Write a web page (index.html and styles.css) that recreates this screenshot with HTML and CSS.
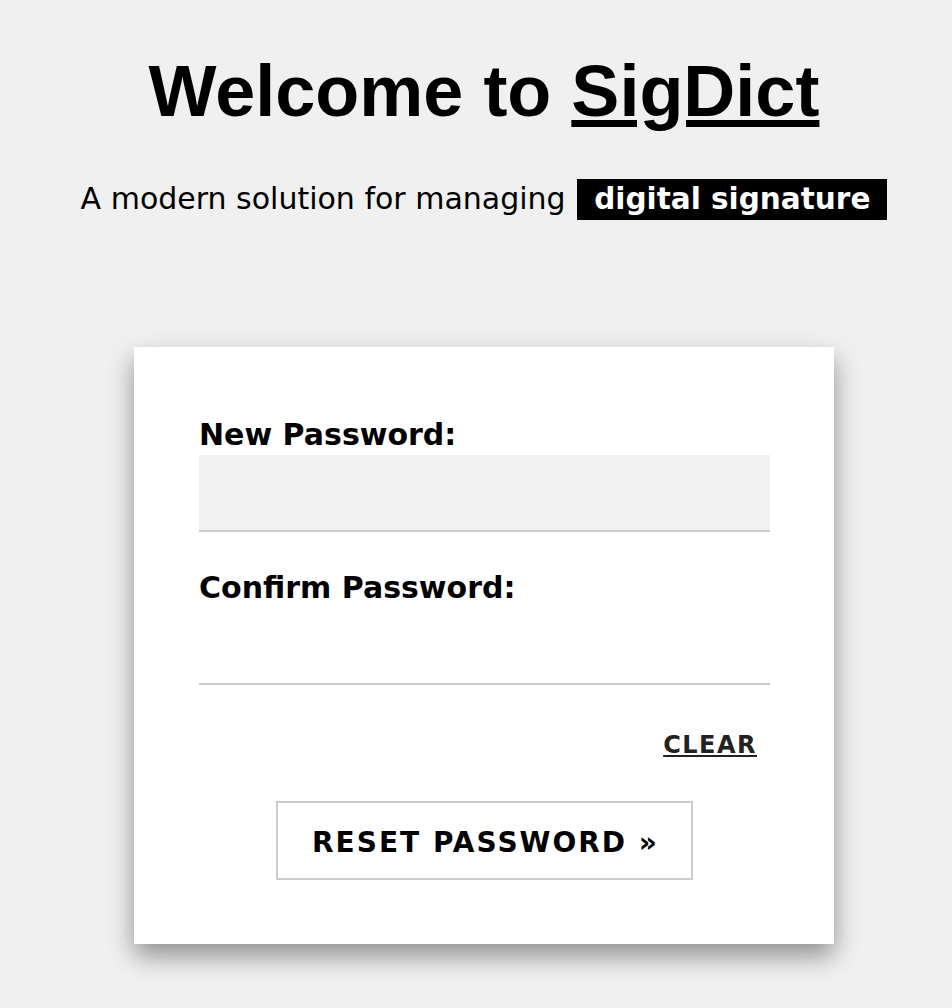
FILE: index.html
```html
<!DOCTYPE html>
<html lang="en">
<head>
<meta charset="utf-8">
<title>SigDict - Reset Password</title>
<link rel="stylesheet" href="styles.css">
</head>
<body>
<div class="page">
  <header class="hero">
    <h1 class="title">Welcome to <a class="brand" href="#">SigDict</a></h1>
    <p class="tagline">A modern solution for managing <span class="badge">digital signature</span></p>
  </header>
  <form class="card">
    <label class="label" for="pw">New Password:</label>
    <input class="field field-filled" id="pw" type="password">
    <label class="label label-second" for="pw2">Confirm Password:</label>
    <input class="field" id="pw2" type="password">
    <div class="clear-row"><a class="clear" href="#">CLEAR</a></div>
    <div class="submit-row"><button class="submit" type="button">RESET PASSWORD &raquo;</button></div>
  </form>
</div>
</body>
</html>
```
FILE: styles.css
```css
html, body {
  margin: 0;
  padding: 0;
  background: #f0f0f0;
}
body {
  font-family: "DejaVu Sans", Verdana, sans-serif;
  color: #000;
  min-height: 1008px;
}
.page {
  padding-left: 16px;
  display: flex;
  flex-direction: column;
  align-items: center;
}
.hero {
  display: flex;
  flex-direction: column;
  align-items: center;
}
.title {
  margin: 55px 0 0;
  font-family: "Liberation Sans", Arial, sans-serif;
  font-weight: 700;
  font-size: 72px;
  line-height: 72px;
}
.brand {
  color: #000;
  text-decoration: underline;
}
.tagline {
  margin: 51px 0 0;
  font-size: 30px;
  line-height: 41px;
}
.badge {
  display: inline-block;
  background: #000;
  color: #fff;
  font-weight: 700;
  font-size: 29.5px;
  padding: 0 17px;
  margin-left: 2px;
}
.card {
  margin: 127px 0 0;
  width: 700px;
  box-sizing: border-box;
  background: #fff;
  padding: 70px 64px 64px 65px;
  box-shadow: 0 12px 24px rgba(0, 0, 0, 0.4);
  display: flex;
  flex-direction: column;
}
.label {
  display: block;
  font-weight: 700;
  font-size: 30px;
  line-height: 35px;
  margin-bottom: 3px;
}
.label-second {
  margin-top: 38px;
}
.field {
  display: block;
  height: 77px;
  box-sizing: border-box;
  border: none;
  border-bottom: 2px solid #cccccc;
  background: transparent;
  padding: 0 12px;
  font-size: 24px;
  font-family: inherit;
  outline: none;
}
.field-filled {
  background: #f1f1f1;
}
.clear-row {
  display: flex;
  justify-content: flex-end;
  margin-top: 47px;
  padding-right: 13px;
}
.clear {
  font-weight: 700;
  font-size: 24px;
  letter-spacing: 1.5px;
  color: #222;
  text-decoration: underline;
  line-height: 27px;
}
.submit-row {
  display: flex;
  justify-content: center;
  margin-top: 42px;
}
.submit {
  font-family: inherit;
  font-weight: 700;
  font-size: 28px;
  letter-spacing: 2px;
  line-height: 35px;
  color: #000;
  background: #fff;
  border: 2px solid #cccccc;
  padding: 22px 32px 18px 34px;
  cursor: pointer;
}
```
